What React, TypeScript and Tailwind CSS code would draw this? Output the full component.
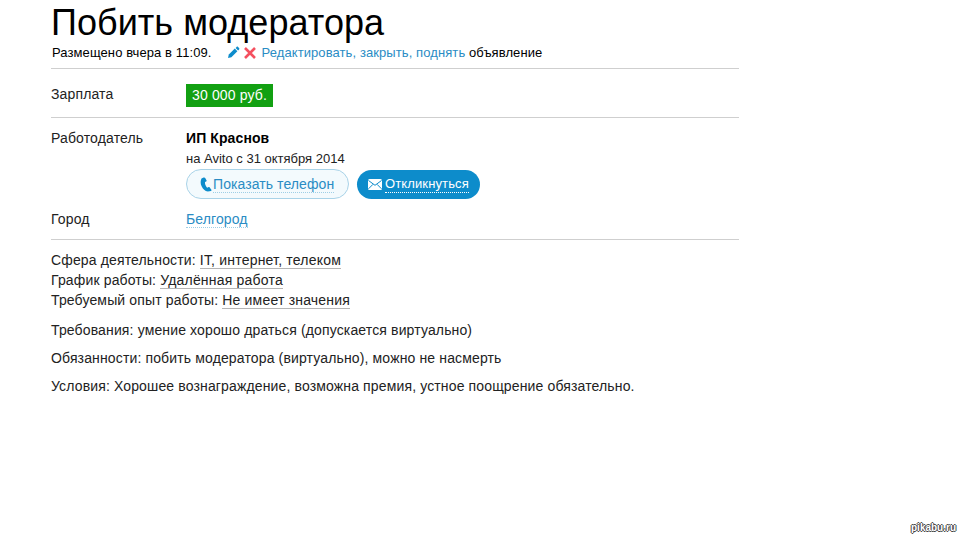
const font = { fontFamily: '"Liberation Sans", Arial, sans-serif' };

function PencilIcon() {
  return (
    <svg width="13" height="13" viewBox="0 0 13 13" className="shrink-0">
      <path d="M1 12l.8-3.400 6-6 2.600 2.600-6 6z" fill="#0d8ccb" />
      <path d="M8.600 1.900l1-1c.4-.4 1-.4 1.400 0l1.100 1.100c.4.4.4 1 0 1.400l-1 1z" fill="#0d8ccb" />
    </svg>
  );
}

function CrossIcon() {
  return (
    <svg width="12" height="12" viewBox="0 0 12 12" className="shrink-0">
      <path d="M1 1l10 10M11 1L1 11" stroke="#f4505f" strokeWidth="2.600" />
    </svg>
  );
}

function PhoneIcon() {
  return (
    <svg width="12" height="15" viewBox="0 0 12 15" className="shrink-0">
      <path
        d="M3.600.6L1.500 1.500C.4 3.500.3 6.500 1.600 9.300c1.300 2.800 3.400 4.800 6.200 5.300l3.200-.7c.6-.3.7-.7.400-1.200L9.700 10.400c-.3-.4-.7-.5-1.100-.3l-1.400.7C6.300 9.900 5.500 8.500 5.100 7 5 6.300 4.900 5.700 5 5.100l1.200-.5c.4-.2.500-.6.400-1L5.200 1C5 .5 4.200.3 3.600.6z"
        fill="#0d8ccb"
      />
    </svg>
  );
}

function MailIcon() {
  return (
    <svg width="14" height="11" viewBox="0 0 14 11" className="shrink-0">
      <rect x="0" y="0" width="14" height="11" rx="1.500" fill="#fff" />
      <path d="M.5 1.500L7 6.300l6.500-4.800M.5 9.800l4.500-4.500M13.500 9.800L9 5.300" stroke="#0d8ccb" strokeWidth="1" fill="none" />
    </svg>
  );
}

function Row({ label, className, children }: { label: string; className?: string; children: React.ReactNode }) {
  return (
    <div className={`flex ${className ?? ""}`}>
      <div className="w-[135px] shrink-0 text-[14px] leading-[18px] tracking-[0.14px] text-[#222]">{label}</div>
      <div className="flex-1">{children}</div>
    </div>
  );
}

function Param({ label, value }: { label: string; value: string }) {
  return (
    <div className="h-[20px] leading-[20px]">
      {label}{" "}
      <span className="border-b border-[#b5b5b5] tracking-[0.2px]">{value}</span>
    </div>
  );
}

export default function App() {
  return (
    <div className="relative h-[540px] w-[960px] overflow-hidden bg-white" style={font}>
      <div className="ml-[51px] w-[688px]">
        <h1 className="h-[44px] text-[36px] font-normal leading-[46px] tracking-[0.05px] text-black">Побить модератора</h1>

        <div className="ml-[1px] mt-[1px] flex h-[15px] items-center text-[13px] leading-[15px] tracking-[0.09px] text-black">
          <span>Размещено вчера в 11:09.</span>
          <span className="ml-[15px] flex items-center gap-[4px]">
            <PencilIcon />
            <CrossIcon />
          </span>
          <span className="ml-[6px]">
            <span className="text-[#2a8cc4]">Редактировать, закрыть, поднять</span> объявление
          </span>
        </div>

        <div className="mt-[8px] border-t border-[#cfcfcf]" />

        <Row label="Зарплата" className="mt-[16px] h-[32px]">
          <span className="-mt-[1px] block h-[23px] w-[87px] bg-[#12a012] px-[6px] text-[14px] leading-[23px] tracking-[0.14px] text-white">30 000 руб.</span>
        </Row>

        <div className="border-t border-[#cfcfcf]" />

        <Row label="Работодатель" className="mt-[11px]">
          <div className="text-[14px] font-bold leading-[18px] tracking-[0.1px] text-black">ИП Краснов</div>
          <div className="mt-[4px] text-[13px] leading-[15px] text-[#222]">на Avito с 31 октября 2014</div>
          <div className="mt-[3px] flex gap-[8px]">
            <button className="flex h-[30px] w-[163px] items-center rounded-full border border-[#a9d3e8] bg-[#f3fafd] pl-[13px] text-[14px] tracking-[0.08px] text-[#2a8cc4]">
              <PhoneIcon />
              <span className="ml-[1px] border-b border-dotted border-[#9fcfe6] leading-[16px]">Показать телефон</span>
            </button>
            <button className="mt-[1px] flex h-[29px] w-[123px] items-center rounded-full bg-[#0d8ccb] pl-[11px] text-[13px] tracking-[0.12px] text-white">
              <MailIcon />
              <span className="ml-[3px] border-b border-dotted border-white leading-[16px]">Откликнуться</span>
            </button>
          </div>
        </Row>

        <Row label="Город" className="mt-[11px] h-[29px]">
          <div className="leading-[18px]">
            <a className="border-b border-dotted border-[#9fcfe6] text-[14px] tracking-[0.1px] text-[#2a8cc4]">Белгород</a>
          </div>
        </Row>

        <div className="border-t border-[#cfcfcf]" />

        <div className="mt-[10px] text-[14px] tracking-[0.14px] text-[#222]">
          <Param label="Сфера деятельности:" value="IT, интернет, телеком" />
          <Param label="График работы:" value="Удалённая работа" />
          <Param label="Требуемый опыт работы:" value="Не имеет значения" />
          <p className="mt-[11px] leading-[18px]">Требования: умение хорошо драться (допускается виртуально)</p>
          <p className="mt-[10px] leading-[18px]">Обязанности: побить модератора (виртуально), можно не насмерть</p>
          <p className="mt-[10px] leading-[18px]">Условия: Хорошее вознаграждение, возможна премия, устное поощрение обязательно.</p>
        </div>
      </div>

      <span className="absolute left-[911px] top-[522px] text-[10px] font-bold leading-[12px] text-white [text-shadow:1px_0_0_#444,-1px_0_0_#444,0_1px_0_#444,0_-1px_0_#444]">
        pikabu.ru
      </span>
    </div>
  );
}
